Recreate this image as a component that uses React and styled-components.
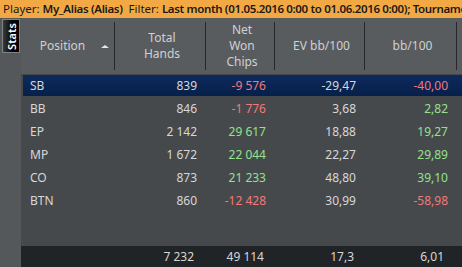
import styled, { createGlobalStyle } from "styled-components";

const GlobalStyle = createGlobalStyle`
  html, body {
    margin: 0;
    padding: 0;
    background: #46494c;
    overflow: hidden;
  }
  body {
    font-family: "Noto Sans", "Open Sans", sans-serif;
    font-size: 12px;
  }
`;

const rows = [
  { pos: "SB", hands: "839", won: "-9 576", ev: "-29,47", bb: "-40,00", selected: true },
  { pos: "BB", hands: "846", won: "-1 776", ev: "3,68", bb: "2,82" },
  { pos: "EP", hands: "2 142", won: "29 617", ev: "18,88", bb: "19,27" },
  { pos: "MP", hands: "1 672", won: "22 044", ev: "22,27", bb: "29,89" },
  { pos: "CO", hands: "873", won: "21 233", ev: "48,80", bb: "39,10" },
  { pos: "BTN", hands: "860", won: "-12 428", ev: "30,99", bb: "-58,98" },
];

const tone = (v) => (v.startsWith("-") ? "neg" : "pos");

export default function App() {
  return (
    <Page>
      <GlobalStyle />
      <FilterBar>
        Player: <b>My_Alias (Alias)</b>&nbsp;&nbsp;Filter: <b>Last month (01.05.2016 0:00 to 01.06.2016 0:00); Tournament</b>
      </FilterBar>
      <Main>
        <Sidebar>
          <StatsTab>
            <span>Stats</span>
          </StatsTab>
        </Sidebar>
        <Table>
          <HeaderRow>
            <HeadCell>
              <span>Position</span>
              <SortArrow />
            </HeadCell>
            <HeadCell>Total<br />Hands</HeadCell>
            <HeadCell>Net<br />Won<br />Chips</HeadCell>
            <HeadCell>EV bb/100</HeadCell>
            <HeadCell>bb/100</HeadCell>
            <HeadCell $last />
          </HeaderRow>
          <Body>
            {rows.map((r) => (
              <Row key={r.pos} $selected={r.selected}>
                <Label>{r.pos}</Label>
                <Num>{r.hands}</Num>
                <Num $tone={tone(r.won)}>{r.won}</Num>
                <Num>{r.ev}</Num>
                <Num $tone={tone(r.bb)}>{r.bb}</Num>
                <span />
              </Row>
            ))}
          </Body>
          <FooterRow>
            <span />
            <Num $pad={12}>7 232</Num>
            <Num $pad={11}>49 114</Num>
            <Num $pad={11}>17,3</Num>
            <Num $pad={13}>6,01</Num>
            <span />
          </FooterRow>
        </Table>
      </Main>
    </Page>
  );
}

const cols = "94px 91px 69px 90px 92px 1fr";

const Page = styled.div`
  display: flex;
  flex-direction: column;
  width: 462px;
  height: 267px;
`;

const FilterBar = styled.div`
  height: 18px;
  line-height: 17px;
  background: #f2a944;
  color: #1a1a1a;
  padding-left: 3px;
  white-space: nowrap;
  overflow: hidden;
  font-size: 11.5px;

  b {
    font-weight: 600;
    letter-spacing: -0.35px;
  }
`;

const Main = styled.div`
  flex: 1;
  display: flex;
  min-height: 0;
`;

const Sidebar = styled.div`
  width: 21px;
  background: #55585b;
  padding: 1px 0 0 2px;
  box-sizing: border-box;
`;

const StatsTab = styled.div`
  width: 18px;
  height: 34px;
  box-sizing: border-box;
  border: 1px solid #808386;
  background: linear-gradient(to right, #3a3a3a, #000 60%);
  display: flex;
  align-items: center;
  justify-content: center;

  span {
    transform: rotate(-90deg);
    color: #fff;
    font-size: 11px;
    font-weight: 600;
    white-space: nowrap;
  }
`;

const Table = styled.div`
  flex: 1;
  display: flex;
  flex-direction: column;
  overflow: hidden;
`;

const HeaderRow = styled.div`
  display: grid;
  grid-template-columns: ${cols};
  height: 56px;
  background: #595c5f;
  color: #cfd0d1;
`;

const HeadCell = styled.div`
  margin: 4px 0;
  border-right: ${(p) => (p.$last ? "none" : "1px solid #26282a")};
  display: flex;
  align-items: center;
  justify-content: center;
  gap: 16px;
  padding-left: 4px;
  text-align: center;
  line-height: 16px;
`;

const SortArrow = styled.i`
  width: 0;
  height: 0;
  border-left: 4px solid transparent;
  border-right: 4px solid transparent;
  border-bottom: 3px solid #e8e8e8;
  margin-right: -10px;
`;

const Body = styled.div`
  flex: 1;
  background: #46494c;
  padding: 1px 0 0 2px;
  display: flex;
  flex-direction: column;
  gap: 2px;
`;

const Row = styled.div`
  display: grid;
  grid-template-columns: 92px 91px 69px 90px 92px 1fr;
  height: 21px;
  align-items: center;
  color: #d6d7d8;
  background: ${(p) =>
    p.$selected ? "linear-gradient(to bottom, #0e2a5c, #06204a)" : "transparent"};
`;

const Label = styled.span`
  padding-left: 7px;
`;

const Num = styled.span`
  text-align: right;
  padding-right: ${(p) => p.$pad ?? 9}px;
  color: ${(p) =>
    p.$tone === "neg" ? "#f47878" : p.$tone === "pos" ? "#92e28e" : "#d6d7d8"};
`;

const FooterRow = styled.div`
  display: grid;
  grid-template-columns: ${cols};
  height: 21px;
  align-items: center;
  background: #212427;
  color: #d6d7d8;
`;
